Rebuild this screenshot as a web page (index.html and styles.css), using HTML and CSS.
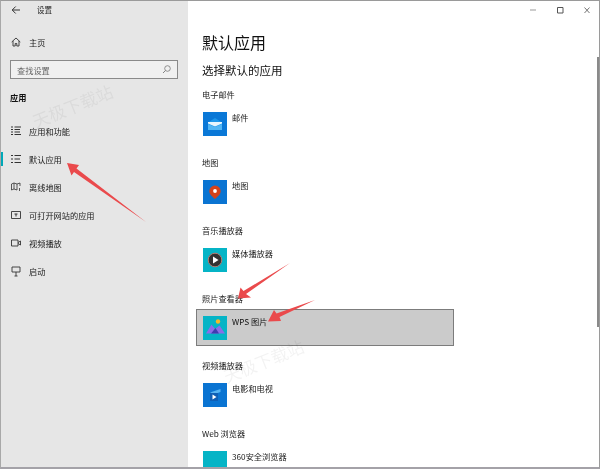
FILE: index.html
```html
<!DOCTYPE html>
<html lang="zh">
<head>
<meta charset="utf-8">
<title>设置</title>
<link rel="stylesheet" href="styles.css">
</head>
<body>
<div class="window">
  <aside class="sidebar">
    <div class="titlebar">
      <svg class="back" width="10" height="10" viewBox="0 0 10 10"><path d="M9 5H1.500M4.700 1.500 1.200 5l3.500 3.500" fill="none" stroke="#333" stroke-width="1"/></svg>
      <span class="apptitle">设置</span>
    </div>
    <div class="navitem home">
      <svg class="navicon" width="10" height="10" viewBox="0 0 10 10"><path d="M.7 5 5 1l4.300 4M2 4v5h2.200V6.500h1.600V9H8V4" fill="none" stroke="#333" stroke-width=".9"/></svg>
      <span>主页</span>
    </div>
    <div class="search">
      <span>查找设置</span>
      <svg width="9" height="9" viewBox="0 0 9 9"><circle cx="5.500" cy="3.500" r="2.800" fill="none" stroke="#777" stroke-width=".8"/><path d="M3.500 5.500 1 8" stroke="#777" stroke-width=".9"/></svg>
    </div>
    <div class="group">应用</div>
    <nav class="nav">
      <div class="navitem">
        <svg class="navicon" width="10" height="10" viewBox="0 0 10 10"><path d="M0 1h2M0 3.500h2M0 6h2M0 8.500h2M3.500 1H10M3.500 3.500H9M3.500 6H9M3.500 8.500H10" stroke="#333" stroke-width="1"/></svg>
        <span>应用和功能</span>
      </div>
      <div class="navitem current">
        <svg class="navicon" width="10" height="10" viewBox="0 0 10 10"><path d="M0 1.500h2M0 5h2M0 8.500h2M3.500 1.500H10M3.500 5H9M3.500 8.500H10" stroke="#333" stroke-width="1.100"/></svg>
        <span>默认应用</span>
      </div>
      <div class="navitem">
        <svg class="navicon" width="10" height="10" viewBox="0 0 10 10"><path d="M.5 2v6l2.500-1V1zM3 1l3 1v6L3 7M6 2l3-1v3M8.500 6v3" fill="none" stroke="#333" stroke-width=".8"/></svg>
        <span>离线地图</span>
      </div>
      <div class="navitem">
        <svg class="navicon" width="10" height="10" viewBox="0 0 10 10"><path d="M.5 1.500h9v7h-9z" fill="none" stroke="#333" stroke-width=".9"/><path d="M3.500 4h3M5 4v2.500" stroke="#333"/></svg>
        <span>可打开网站的应用</span>
      </div>
      <div class="navitem">
        <svg class="navicon" width="10" height="10" viewBox="0 0 10 10"><path d="M.5 2h6.500v6H.5zM7 4.500 9.500 3v4L7 5.500" fill="none" stroke="#333" stroke-width=".9"/></svg>
        <span>视频播放</span>
      </div>
      <div class="navitem">
        <svg class="navicon" width="10" height="11" viewBox="0 0 10 11"><path d="M1 1h8v5H1zM5 6v4M3.500 10h3" fill="none" stroke="#333" stroke-width=".9"/></svg>
        <span>启动</span>
      </div>
    </nav>
  </aside>

  <main class="content">
    <div class="controls">
      <svg width="60" height="10" viewBox="0 0 60 10"><path d="M0 5h6" stroke="#999"/><path d="M27.500 2.500h5.500v5.500h-5.500z" fill="none" stroke="#555"/><path d="M54.500 2.500l5 5.500M59.500 2.500l-5 5.500" stroke="#666" stroke-width=".9"/></svg>
    </div>
    <h1>默认应用</h1>
    <h2>选择默认的应用</h2>

    <section class="slot">
      <div class="label">电子邮件</div>
      <div class="app">
        <svg class="tile" width="24" height="24" viewBox="0 0 24 24"><rect width="24" height="24" fill="#0a78d7"/><path d="M5 10.500 12 6l7 4.500V18H5z" fill="#1e97ea"/><path d="M5 10h14v1.500l-7 3-7-3z" fill="#e8f5fd"/><path d="M5 12l7 3 7-3v6H5z" fill="#52b6f4"/></svg>
        <span>邮件</span>
      </div>
    </section>

    <section class="slot">
      <div class="label">地图</div>
      <div class="app">
        <svg class="tile" width="24" height="24" viewBox="0 0 24 24"><rect width="24" height="24" fill="#0a74d2"/><path d="M12 5.500a5.700 5.700 0 0 1 5.700 5.700c0 3-3.200 5.500-5.700 7.800-2.500-2.300-5.700-4.800-5.700-7.800A5.700 5.700 0 0 1 12 5.500z" fill="#d5421c"/><circle cx="12" cy="11" r="1.900" fill="#fff"/></svg>
        <span>地图</span>
      </div>
    </section>

    <section class="slot">
      <div class="label">音乐播放器</div>
      <div class="app">
        <svg class="tile" width="24" height="24" viewBox="0 0 24 24"><rect width="24" height="24" fill="#05b4c6"/><circle cx="12" cy="12" r="6.800" fill="#333" stroke="#b97a70" stroke-width="1"/><path d="M10 8.500v7l5.500-3.500z" fill="#fff"/></svg>
        <span>媒体播放器</span>
      </div>
    </section>

    <section class="slot photo">
      <div class="label">照片查看器</div>
      <div class="app selected">
        <svg class="tile" width="24" height="24" viewBox="0 0 24 24"><rect width="24" height="24" fill="#05b4c6"/><circle cx="15" cy="5.500" r="2.200" fill="#f5b82a"/><path d="M3 17.500 8.500 8.500 12 13l4.500-3.500 5.500 8z" fill="#8a6ee8"/><path d="M8 17.500 12.500 12l3.500 5.500z" fill="#3f3cb0"/></svg>
        <span>WPS 图片</span>
      </div>
    </section>

    <section class="slot">
      <div class="label">视频播放器</div>
      <div class="app">
        <svg class="tile" width="24" height="24" viewBox="0 0 24 24"><rect width="24" height="24" fill="#0a74d2"/><path d="M7 9.500 17.500 6v3L12 11z" fill="#56b4f2"/><path d="M7 10h8v8H7z" fill="#0f5fb5"/><path d="M9.500 11.500v5l4-2.500z" fill="#fff"/></svg>
        <span>电影和电视</span>
      </div>
    </section>

    <section class="slot">
      <div class="label">Web 浏览器</div>
      <div class="app">
        <svg class="tile" width="24" height="24" viewBox="0 0 24 24"><rect width="24" height="24" fill="#05b4c6"/></svg>
        <span>360安全浏览器</span>
      </div>
    </section>
  </main>

  <div class="scrollthumb"></div>

  <div class="mark mark-a">天极下载站</div>
  <div class="mark mark-b">天极下载站</div>

  <svg class="arrows" width="600" height="469" viewBox="0 0 600 469">
    <path d="M67 163 79 165 76.500 168.500 146 222 74 172 71.500 175.500z" fill="#ea4a4c"/>
    <path d="M290 263 246 294 251 297.500 238 298.500 240.500 287.500 243.500 291z" fill="#ea4a4c"/>
    <path d="M315 300 279.500 317 281 321 268 321.500 274 310 276.500 313.500z" fill="#ea4a4c"/>
  </svg>
</div>
</body>
</html>
```
FILE: styles.css
```css
* { box-sizing: border-box; }
html, body { margin: 0; padding: 0; }
body {
  width: 600px;
  height: 469px;
  overflow: hidden;
  background: #fff;
  font-family: "Noto Sans CJK SC", "Noto Sans", sans-serif;
  color: #111;
}
.window {
  position: relative;
  display: flex;
  width: 600px;
  height: 469px;
  overflow: hidden;
  border-top: 1px solid #9a9a9a;
  border-right: 1px solid #9a9a9a;
  border-bottom: 2px solid #a4a2a8;
  border-left: 1px solid #a8a8a8;
  filter: blur(0.35px);
}
.sidebar {
  flex: 0 0 187px;
  background: #e6e6e6;
  font-size: 8.2px;
}
.titlebar {
  display: flex;
  align-items: center;
  height: 17px;
  padding-left: 10px;
}
.apptitle { margin-left: 16px; font-size: 7.5px; color: #222; }
.navitem {
  position: relative;
  display: flex;
  align-items: center;
  height: 28px;
  padding-left: 10px;
  color: #1a1a1a;
}
.navitem span { white-space: nowrap; }
.navicon { flex: none; margin-right: 8px; }
.home { margin-top: 10px; }
.search {
  display: flex;
  align-items: center;
  justify-content: space-between;
  width: 168px;
  height: 19px;
  margin: 4px 0 0 9px;
  padding: 0 6px;
  background: #f0f0f0;
  border: 1px solid #8a8a8a;
  color: #666;
}
.group {
  margin: 12px 0 0 9px;
  height: 12px;
  line-height: 12px;
  font-weight: 700;
  color: #111;
}
.nav { margin-top: 14px; }
.current::before {
  content: "";
  position: absolute;
  left: 0;
  top: 7px;
  width: 2px;
  height: 14px;
  background: #00a8b8;
}
.content {
  flex: 1;
  min-width: 0;
  padding-left: 14px;
  background: #fff;
}
.controls {
  display: flex;
  justify-content: flex-end;
  height: 14px;
  padding: 4px 9px 0 0;
}
h1 {
  margin: 17px 0 0;
  font-size: 16px;
  line-height: 20px;
  font-weight: 400;
  color: #111;
}
h2 {
  margin: 10px 0 0;
  font-size: 11.5px;
  line-height: 16px;
  font-weight: 400;
  color: #111;
}
.slot { height: 68px; }
.slot:first-of-type { margin-top: 10px; }
.photo { height: 67px; }
.label {
  height: 12px;
  line-height: 12px;
  font-size: 8.2px;
  color: #1a1a1a;
}
.app {
  display: flex;
  align-items: flex-start;
  gap: 5px;
  margin-top: 12px;
  font-size: 8.2px;
  line-height: 12px;
  color: #1a1a1a;
}
.app span { white-space: nowrap; margin-top: -1px; }
.tile { flex: none; display: block; margin-left: 1px; }
.selected {
  width: 258px;
  height: 37px;
  margin: 5px 0 0 -6px;
  padding: 6px 0 0 5px;
  background: #cbcbcb;
  border: 1px solid #7c7c7c;
  color: #111;
}
.scrollthumb {
  position: absolute;
  right: 0;
  top: 56px;
  width: 2px;
  height: 270px;
  background: #8a8a8a;
}
.mark {
  position: absolute;
  font-size: 17px;
  line-height: 20px;
  white-space: nowrap;
  color: rgba(0, 0, 0, 0.05);
  transform: rotate(-22deg);
  pointer-events: none;
}
.mark-a { left: 29px; top: 95px; }
.mark-b { left: 220px; top: 350px; }
.arrows { position: absolute; left: -1px; top: -1px; pointer-events: none; }
```
